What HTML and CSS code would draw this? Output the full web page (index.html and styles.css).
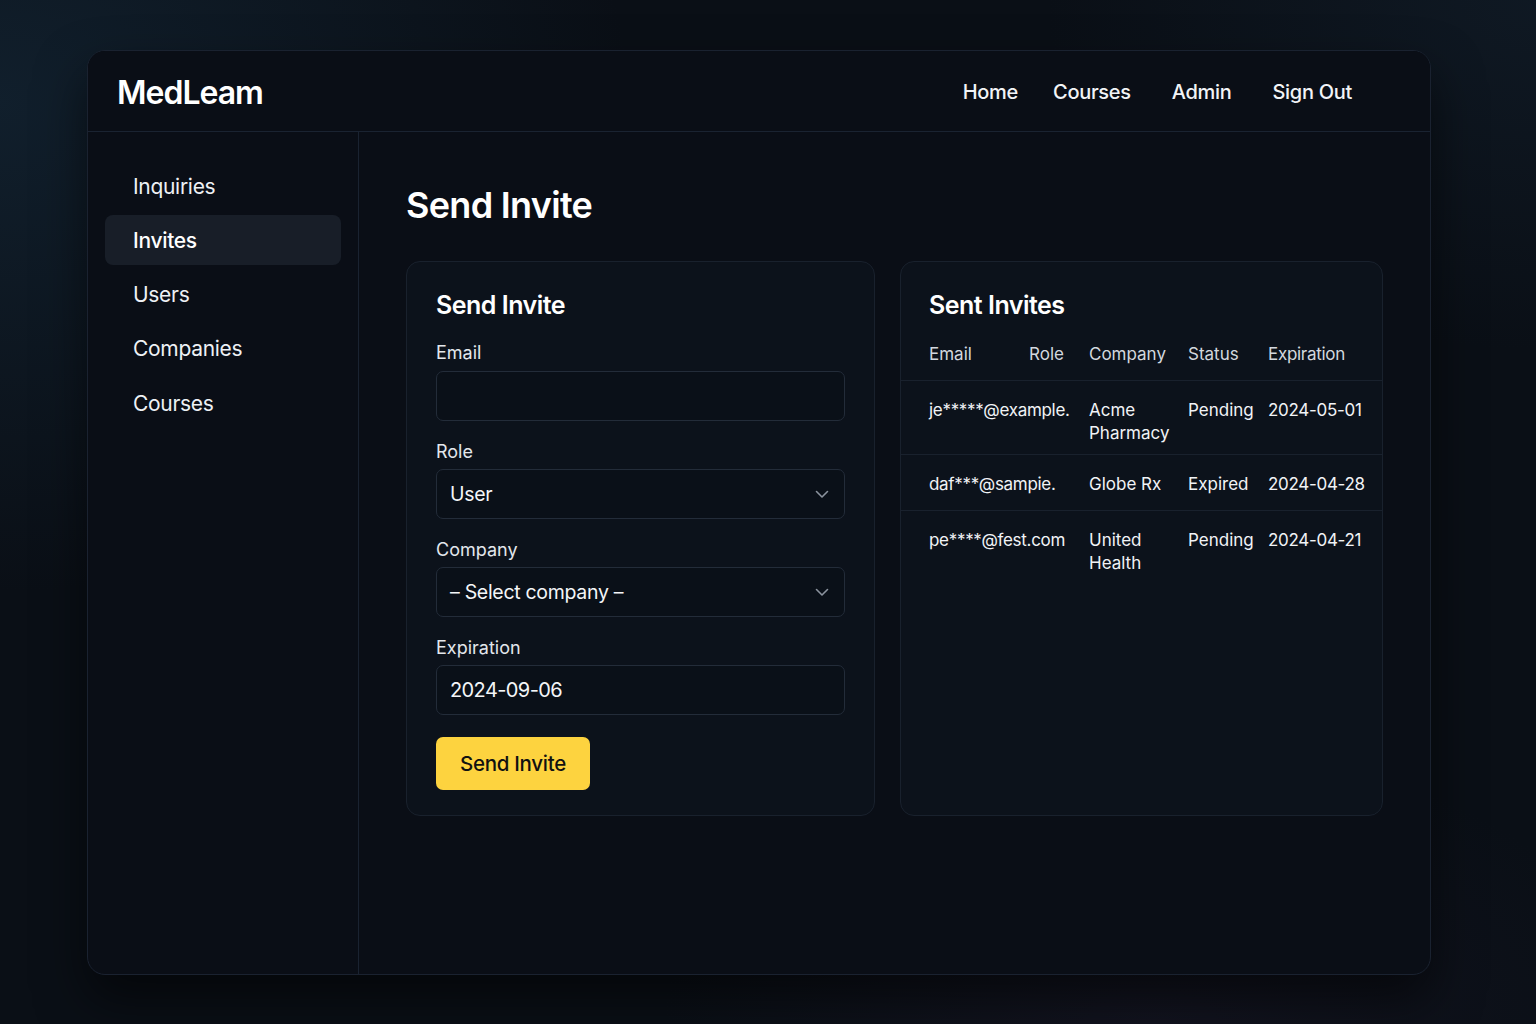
FILE: index.html
```html
<!DOCTYPE html>
<html lang="en">
<head>
<meta charset="utf-8">
<title>MedLeam - Send Invite</title>
<link rel="stylesheet" href="styles.css">
</head>
<body>
<div class="frame">
  <header class="topbar">
    <div class="logo">MedLeam</div>
    <nav class="topnav">
      <a class="nav-home">Home</a>
      <a class="nav-courses">Courses</a>
      <a class="nav-admin">Admin</a>
      <a class="nav-signout">Sign Out</a>
    </nav>
  </header>
  <div class="body">
    <aside class="sidebar">
      <a class="side-item">Inquiries</a>
      <a class="side-item active">Invites</a>
      <a class="side-item">Users</a>
      <a class="side-item">Companies</a>
      <a class="side-item">Courses</a>
    </aside>
    <main class="main">
      <h1 class="page-title">Send Invite</h1>
      <div class="cards">
        <section class="card form-card">
          <h2 class="card-title">Send Invite</h2>
          <div class="field first">
            <label class="label">Email</label>
            <div class="input"></div>
          </div>
          <div class="field">
            <label class="label">Role</label>
            <div class="input select">
              <span>User</span>
              <svg class="chev" width="14" height="9" viewBox="0 0 14 9"><path d="M1.5 1.5 L7 7 L12.5 1.5" fill="none" stroke="#8b939e" stroke-width="1.6" stroke-linecap="round" stroke-linejoin="round"/></svg>
            </div>
          </div>
          <div class="field">
            <label class="label">Company</label>
            <div class="input select">
              <span>– Select company –</span>
              <svg class="chev" width="14" height="9" viewBox="0 0 14 9"><path d="M1.5 1.5 L7 7 L12.5 1.5" fill="none" stroke="#8b939e" stroke-width="1.6" stroke-linecap="round" stroke-linejoin="round"/></svg>
            </div>
          </div>
          <div class="field">
            <label class="label">Expiration</label>
            <div class="input date"><span>2024-09-06</span></div>
          </div>
          <button class="btn">Send Invite</button>
        </section>
        <section class="card list-card">
          <h2 class="card-title list-title">Sent Invites</h2>
          <div class="table">
            <div class="trow thead">
              <div class="c-email">Email</div>
              <div class="c-role">Role</div>
              <div class="c-company">Company</div>
              <div class="c-status">Status</div>
              <div class="c-exp">Expiration</div>
            </div>
            <div class="trow">
              <div class="c-emailv">je*****@example.</div>
              <div class="c-company">Acme<br>Pharmacy</div>
              <div class="c-status">Pending</div>
              <div class="c-exp">2024-05-01</div>
            </div>
            <div class="trow">
              <div class="c-emailv">daf***@sampie.</div>
              <div class="c-company">Globe Rx</div>
              <div class="c-status">Expired</div>
              <div class="c-exp">2024-04-28</div>
            </div>
            <div class="trow last">
              <div class="c-emailv">pe****@fest.com</div>
              <div class="c-company">United<br>Health</div>
              <div class="c-status">Pending</div>
              <div class="c-exp">2024-04-21</div>
            </div>
          </div>
        </section>
      </div>
    </main>
  </div>
</div>
</body>
</html>
```
FILE: styles.css
```css
* { box-sizing: border-box; }
html, body { height: 100%; }
body {
  margin: 0;
  font-family: Inter, "Noto Sans", "Liberation Sans", sans-serif;
  color: #f1f3f6;
  background:
    radial-gradient(ellipse 900px 700px at 0% 10%, rgba(22, 44, 62, 0.55), rgba(22,44,62,0) 70%),
    radial-gradient(ellipse 700px 500px at 100% 0%, rgba(20, 34, 48, 0.5), rgba(20,34,48,0) 70%),
    radial-gradient(ellipse 700px 400px at 75% 100%, rgba(26, 24, 40, 0.5), rgba(26,24,40,0) 70%),
    #0a0f16;
  padding: 50px 105px 50px 87px;
  overflow: hidden;
}
.frame {
  width: 1344px;
  height: 925px;
  background: #0a0e16;
  border: 1px solid #1a2230;
  border-radius: 18px;
  box-shadow: 0 24px 50px rgba(0,0,0,0.55);
  display: flex;
  flex-direction: column;
  overflow: hidden;
}
.topbar {
  height: 81px;
  flex: none;
  border-bottom: 1px solid #1a2331;
  display: flex;
  align-items: center;
  padding: 0 0 0 29px;
  background: #0a0e16;
}
.logo {
  font-size: 32px;
  font-weight: 600;
  letter-spacing: -1px;
  color: #ffffff;
  padding-top: 2px;
}
.topnav {
  margin-left: auto;
  display: flex;
  align-items: center;
  font-size: 20px;
  font-weight: 500;
  letter-spacing: -0.3px;
  color: #f2f4f7;
  padding-right: 78px;
  padding-top: 1px;
}
.topnav a { display: block; }
.nav-courses { margin-left: 35px; }
.nav-admin { margin-left: 41px; }
.nav-signout { margin-left: 41px; }
.body {
  flex: 1;
  display: flex;
  min-height: 0;
}
.sidebar {
  width: 271px;
  flex: none;
  border-right: 1px solid #1a2331;
  padding: 29px 17px 0 17px;
  display: flex;
  flex-direction: column;
  gap: 4.3px;
}
.side-item {
  height: 50px;
  display: flex;
  align-items: center;
  padding-left: 28px;
  font-size: 21px;
  letter-spacing: -0.3px;
  color: #eef1f5;
  border-radius: 8px;
}
.side-item.active {
  background: #181e28;
  font-weight: 500;
  color: #ffffff;
}
.main {
  flex: 1;
  padding: 50px 48px 0 47px;
}
.page-title {
  margin: 0;
  font-size: 36px;
  line-height: 46px;
  font-weight: 600;
  letter-spacing: -0.7px;
  color: #ffffff;
}
.cards {
  margin-top: 33px;
  display: flex;
  gap: 25px;
}
.card {
  height: 555px;
  background: #0c121b;
  border: 1px solid #19212d;
  border-radius: 14px;
}
.form-card {
  width: 469px;
  padding: 27px 29px 0 29px;
}
.list-card {
  width: 483px;
  padding-top: 27px;
}
.card-title {
  margin: 0;
  font-size: 25px;
  line-height: 32px;
  font-weight: 600;
  letter-spacing: -0.5px;
  color: #ffffff;
}
.field { margin-top: 20px; }
.field.first { margin-top: 21px; }
.label {
  display: block;
  font-size: 18px;
  line-height: 22px;
  color: #e3e7ec;
  margin-bottom: 6px;
}
.field.first .label { margin-bottom: 7px; }
.input {
  height: 50px;
  background: #0a1018;
  border: 1px solid #232c39;
  border-radius: 7px;
  display: flex;
  align-items: center;
  padding: 0 13px 0 13px;
  font-size: 19.5px;
  letter-spacing: -0.3px;
  color: #f4f6f8;
}
.select .chev { margin-left: auto; margin-right: 2px; }
.date span { font-size: 20px; letter-spacing: -0.6px; }
.btn {
  margin-top: 22px;
  height: 53px;
  width: 154px;
  background: #fdd33f;
  border: none;
  border-radius: 7px;
  font-family: inherit;
  font-size: 20.5px;
  font-weight: 500;
  letter-spacing: -0.3px;
  color: #111111;
  padding: 0;
}
.list-title { padding-left: 28px; }
.table { margin-top: 11px; }
.trow {
  display: grid;
  grid-template-columns: 100px 60px 99px 80px 1fr;
  padding-left: 28px;
  border-bottom: 1px solid #19212d;
  font-size: 17px;
  line-height: 23px;
  color: #f1f3f6;
  padding-top: 18px;
  padding-bottom: 9px;
  min-height: 56px;
}
.trow.last { border-bottom: none; }
.thead {
  color: #d3d8df;
  padding-top: 11px;
  padding-bottom: 14px;
  min-height: 0;
}
.c-email { grid-column: 1; }
.c-role { grid-column: 2; text-align: right; padding-right: 25px; }
.c-emailv { grid-column: 1 / 3; white-space: nowrap; letter-spacing: -0.3px; }
.c-company { grid-column: 3; }
.c-status { grid-column: 4; }
.c-exp { grid-column: 5; letter-spacing: -0.3px; }
```
